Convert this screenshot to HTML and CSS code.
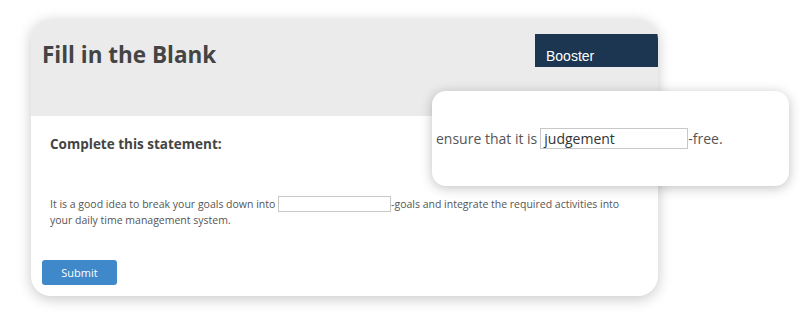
FILE: index.html
```html
<!DOCTYPE html>
<html>
<head>
<meta charset="utf-8">
<link rel="stylesheet" href="styles.css">
</head>
<body>
<div class="stage">
  <div class="card">
    <div class="card-head">
      <h1 class="title">Fill in the Blank</h1>
      <div class="booster">Booster</div>
    </div>
    <div class="card-body">
      <h2 class="prompt">Complete this statement:</h2>
      <p class="statement">It is a good idea to break your goals down into <span class="blank"></span>-goals and integrate the required activities into your daily time management system.</p>
      <button class="submit">Submit</button>
    </div>
  </div>
  <div class="popup">
    <span>ensure that it is</span>
    <span class="answer">judgement</span>
    <span>-free.</span>
  </div>
</div>
</body>
</html>
```

FILE: styles.css
```css
html, body {
  margin: 0;
  padding: 0;
  background: #ffffff;
  font-family: "Open Sans", "Liberation Sans", sans-serif;
}

.stage {
  position: relative;
  width: 808px;
  height: 331px;
  padding: 19px 0 0 31px;
  box-sizing: border-box;
}

.card {
  width: 627px;
  height: 277px;
  border-radius: 20px;
  background: #ffffff;
  overflow: hidden;
  box-shadow: 0 3px 14px rgba(0, 0, 0, 0.22);
  display: flex;
  flex-direction: column;
}

.card-head {
  height: 97px;
  background: #ebebeb;
  display: flex;
  justify-content: space-between;
  align-items: flex-start;
  flex-shrink: 0;
}

.title {
  margin: 20px 0 0 11px;
  font-size: 22.5px;
  font-weight: 700;
  color: #444444;
  line-height: 32px;
}

.booster {
  margin-top: 15px;
  width: 123px;
  height: 33px;
  background: #1c3550;
  color: #ffffff;
  font-family: "Liberation Sans", Arial, sans-serif;
  font-size: 14px;
  padding: 14px 0 0 11px;
  box-sizing: border-box;
  line-height: 16px;
}

.card-body {
  padding: 17px 0 0 11px;
  display: flex;
  flex-direction: column;
  align-items: flex-start;
}

.prompt {
  margin: 0 0 0 8px;
  font-size: 13.5px;
  font-weight: 700;
  color: #444444;
  line-height: 22px;
}

.statement {
  margin: 41px 0 0 8px;
  width: 580px;
  font-size: 10.5px;
  line-height: 16px;
  color: #555555;
}

.blank {
  display: inline-block;
  width: 111px;
  height: 14px;
  border: 1px solid #c8c8c8;
  vertical-align: -4px;
  background: #fff;
}

.submit {
  margin-top: 32px;
  width: 75px;
  height: 25px;
  border: none;
  border-radius: 3px;
  background: #3f88c9;
  color: #ffffff;
  font-family: "Open Sans", "Liberation Sans", sans-serif;
  font-size: 11px;
  padding: 0;
}

.popup {
  position: absolute;
  left: 432px;
  top: 91px;
  width: 357px;
  height: 95px;
  border-radius: 14px;
  background: #ffffff;
  box-shadow: 0 2px 12px rgba(0, 0, 0, 0.25);
  display: flex;
  align-items: center;
  padding-left: 4px;
  box-sizing: border-box;
  font-size: 14px;
  color: #555555;
  gap: 3px;
}

.answer {
  display: inline-block;
  width: 143px;
  height: 19px;
  border: 1px solid #c8c8c8;
  line-height: 20px;
  padding-left: 3px;
  box-sizing: content-box;
  color: #333333;
  margin-right: -3px;
}
```
